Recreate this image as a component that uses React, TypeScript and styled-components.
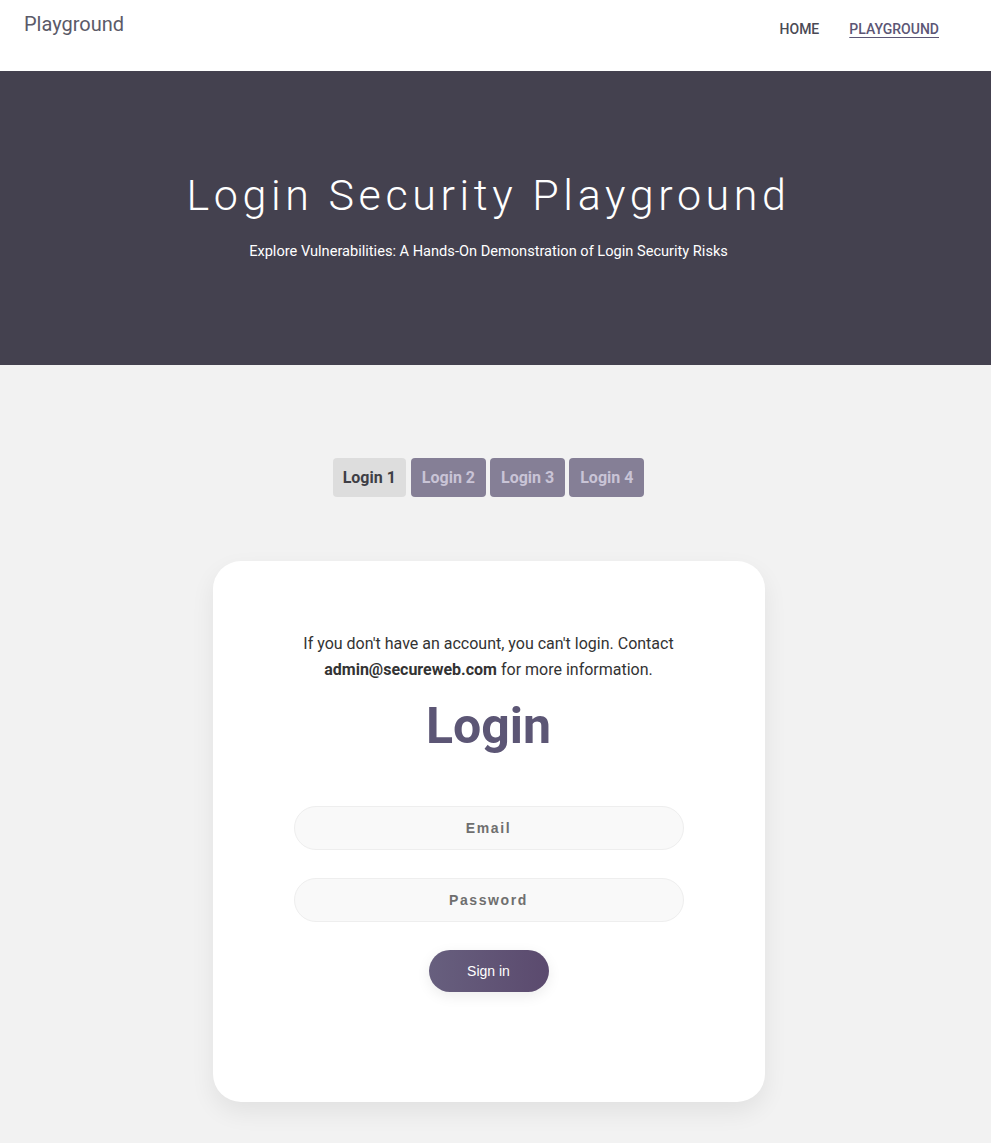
import styled, { createGlobalStyle } from "styled-components";

const GlobalStyle = createGlobalStyle`
  * {
    box-sizing: border-box;
  }

  body {
    margin: 0;
    background: #f2f2f2;
    font-family: Roboto, "Noto Sans", sans-serif;
  }
`;

const Header = styled.header`
  height: 71px;
  background: #ffffff;
  display: flex;
  justify-content: space-between;
  align-items: flex-start;
  padding: 0 52px 0 24px;
`;

const Brand = styled.div`
  font-size: 20px;
  color: #5b5a68;
  margin-top: 12px;
`;

const Nav = styled.nav`
  display: flex;
  gap: 30px;
  margin-top: 21px;
`;

const NavLink = styled.a<{ $active?: boolean }>`
  font-size: 14px;
  font-weight: 500;
  color: ${(p) => (p.$active ? "#5c5675" : "#4a4a55")};
  text-decoration: ${(p) => (p.$active ? "underline" : "none")};
  text-underline-offset: 3px;
  cursor: pointer;
`;

const Hero = styled.section`
  height: 294px;
  background: #44414f;
  display: flex;
  flex-direction: column;
  align-items: center;
  padding: 100px 14px 0 0;
  color: #ffffff;
`;

const HeroTitle = styled.h1`
  margin: 0;
  font-size: 43px;
  font-weight: 300;
  letter-spacing: 4.6px;
  line-height: 48px;
`;

const HeroSubtitle = styled.p`
  margin: 22px 0 0;
  font-size: 14.6px;
  line-height: 20px;
`;

const Main = styled.main`
  display: flex;
  flex-direction: column;
  align-items: center;
  padding: 93px 14px 41px 0;
`;

const Tabs = styled.div`
  display: flex;
  gap: 4px;
`;

const Tab = styled.button<{ $active?: boolean }>`
  height: 39px;
  padding: 0 ${(p) => (p.$active ? "10px" : "11px")};
  margin-right: ${(p) => (p.$active ? "1px" : "0")};
  border: none;
  border-radius: 4px;
  font-family: Roboto, sans-serif;
  font-size: 16px;
  font-weight: 700;
  background: ${(p) => (p.$active ? "#dddddd" : "#857f96")};
  color: ${(p) => (p.$active ? "#3f3f46" : "#c9c4d6")};
  cursor: pointer;
`;

const Card = styled.div`
  width: 552px;
  margin-top: 64px;
  background: #ffffff;
  border-radius: 28px;
  box-shadow: 0 10px 25px rgba(0, 0, 0, 0.07);
  display: flex;
  flex-direction: column;
  align-items: center;
  padding: 70px 81px 110px;
`;

const Note = styled.p`
  margin: 0;
  font-size: 16px;
  line-height: 26px;
  color: #333333;
  text-align: center;

  strong {
    font-weight: 700;
  }
`;

const Heading = styled.h2`
  margin: 13px 0 50px;
  font-size: 50px;
  line-height: 60px;
  font-weight: 700;
  color: #5c5675;
`;

const Form = styled.form`
  width: 100%;
  display: flex;
  flex-direction: column;
  align-items: center;
  gap: 28px;
`;

const Input = styled.input`
  width: 100%;
  height: 44px;
  border: 1px solid #eeeeee;
  border-radius: 22px;
  background: #f9f9f9;
  text-align: center;
  font-family: "Liberation Sans", Arial, sans-serif;
  font-size: 14px;
  outline: none;

  &::placeholder {
    color: #6f6f6f;
    font-weight: 700;
    letter-spacing: 1.6px;
  }
`;

const SignIn = styled.button`
  width: 120px;
  height: 42px;
  border: none;
  border-radius: 21px;
  background: linear-gradient(90deg, #675f7e, #5b4a6e);
  color: #ffffff;
  font-family: "Liberation Sans", Arial, sans-serif;
  font-size: 14px;
  box-shadow: 0 4px 14px rgba(0, 0, 0, 0.08);
  cursor: pointer;
`;

export default function App() {
  return (
    <>
      <GlobalStyle />
      <Header>
        <Brand>Playground</Brand>
        <Nav>
          <NavLink>HOME</NavLink>
          <NavLink $active>PLAYGROUND</NavLink>
        </Nav>
      </Header>
      <Hero>
        <HeroTitle>Login Security Playground</HeroTitle>
        <HeroSubtitle>
          Explore Vulnerabilities: A Hands-On Demonstration of Login Security Risks
        </HeroSubtitle>
      </Hero>
      <Main>
        <Tabs>
          <Tab $active>Login 1</Tab>
          <Tab>Login 2</Tab>
          <Tab>Login 3</Tab>
          <Tab>Login 4</Tab>
        </Tabs>
        <Card>
          <Note>
            If you don't have an account, you can't login. Contact{" "}
            <strong>admin@secureweb.com</strong> for more information.
          </Note>
          <Heading>Login</Heading>
          <Form onSubmit={(e) => e.preventDefault()}>
            <Input type="email" placeholder="Email" />
            <Input type="password" placeholder="Password" />
            <SignIn type="submit">Sign in</SignIn>
          </Form>
        </Card>
      </Main>
    </>
  );
}
